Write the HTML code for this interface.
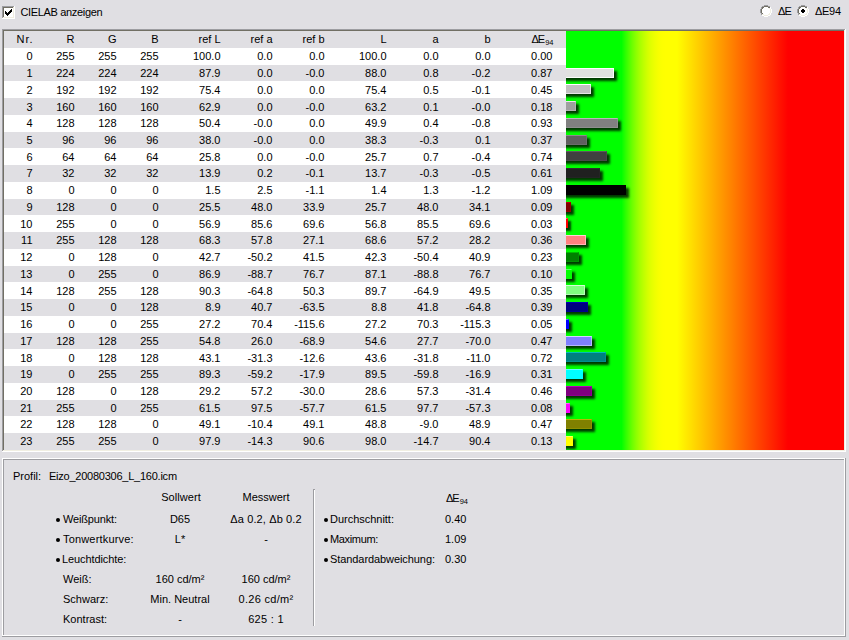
<!DOCTYPE html>
<html lang="de"><head><meta charset="utf-8"><title>CIELAB</title>
<style>html,body{margin:0;padding:0}
body{width:849px;height:640px;background:#E0DFE3;position:relative;overflow:hidden;font-family:"Liberation Sans",Arial,sans-serif;font-size:11px;color:#000;line-height:13px}
.a{position:absolute}
.t{position:absolute;white-space:nowrap;height:13px;line-height:13px}
.r{text-align:right}
.c{text-align:center}
.row{position:absolute;left:4px;width:562px}
.w{background:#fff}
.bar{position:absolute;left:-6px;height:8px;border:1px solid;box-shadow:3px 3px 2.2px rgba(0,10,0,.8)}
.sub{font-size:7.5px;position:relative;top:1.5px;letter-spacing:0}
.b{position:absolute;width:4px;height:4px;border-radius:2px;background:#000}
</style></head><body>
<div class="a" style="left:2px;top:6px;width:13px;height:13px;background:#FFFFFF"></div><div class="a" style="left:2px;top:6px;width:12px;height:12px;background:#9D9DA1"></div><div class="a" style="left:3px;top:7px;width:11px;height:11px;background:#F1EFE2"></div><div class="a" style="left:3px;top:7px;width:10px;height:10px;background:#716F64"></div><div class="a" style="left:4px;top:8px;width:9px;height:9px;background:#fff"></div><svg class="a" style="left:5px;top:9px" width="7" height="7" shape-rendering="crispEdges"><rect x="0" y="2" width="1" height="3" fill="#000"/><rect x="1" y="3" width="1" height="3" fill="#000"/><rect x="2" y="4" width="1" height="3" fill="#000"/><rect x="3" y="3" width="1" height="3" fill="#000"/><rect x="4" y="2" width="1" height="3" fill="#000"/><rect x="5" y="1" width="1" height="3" fill="#000"/><rect x="6" y="0" width="1" height="3" fill="#000"/></svg><div class="t" style="left:20.4px;top:6px;letter-spacing:-0.33px">CIELAB anzeigen</div>
<svg class="a" style="left:760px;top:5px" width="12" height="12" shape-rendering="crispEdges"><rect x="4" y="0" width="4" height="1" fill="#9D9DA1"/><rect x="2" y="1" width="2" height="1" fill="#9D9DA1"/><rect x="4" y="1" width="4" height="1" fill="#716F64"/><rect x="8" y="1" width="2" height="1" fill="#9D9DA1"/><rect x="1" y="2" width="1" height="1" fill="#9D9DA1"/><rect x="2" y="2" width="2" height="1" fill="#716F64"/><rect x="4" y="2" width="4" height="1" fill="#fff"/><rect x="8" y="2" width="2" height="1" fill="#716F64"/><rect x="10" y="2" width="1" height="1" fill="#FFFFFF"/><rect x="1" y="3" width="1" height="1" fill="#9D9DA1"/><rect x="2" y="3" width="1" height="1" fill="#716F64"/><rect x="3" y="3" width="6" height="1" fill="#fff"/><rect x="9" y="3" width="1" height="1" fill="#F1EFE2"/><rect x="10" y="3" width="1" height="1" fill="#FFFFFF"/><rect x="0" y="4" width="1" height="1" fill="#9D9DA1"/><rect x="1" y="4" width="1" height="1" fill="#716F64"/><rect x="2" y="4" width="8" height="1" fill="#fff"/><rect x="10" y="4" width="1" height="1" fill="#F1EFE2"/><rect x="11" y="4" width="1" height="1" fill="#FFFFFF"/><rect x="0" y="5" width="1" height="1" fill="#9D9DA1"/><rect x="1" y="5" width="1" height="1" fill="#716F64"/><rect x="2" y="5" width="8" height="1" fill="#fff"/><rect x="10" y="5" width="1" height="1" fill="#F1EFE2"/><rect x="11" y="5" width="1" height="1" fill="#FFFFFF"/><rect x="0" y="6" width="1" height="1" fill="#9D9DA1"/><rect x="1" y="6" width="1" height="1" fill="#716F64"/><rect x="2" y="6" width="8" height="1" fill="#fff"/><rect x="10" y="6" width="1" height="1" fill="#F1EFE2"/><rect x="11" y="6" width="1" height="1" fill="#FFFFFF"/><rect x="0" y="7" width="1" height="1" fill="#9D9DA1"/><rect x="1" y="7" width="1" height="1" fill="#716F64"/><rect x="2" y="7" width="8" height="1" fill="#fff"/><rect x="10" y="7" width="1" height="1" fill="#F1EFE2"/><rect x="11" y="7" width="1" height="1" fill="#FFFFFF"/><rect x="1" y="8" width="1" height="1" fill="#9D9DA1"/><rect x="2" y="8" width="1" height="1" fill="#716F64"/><rect x="3" y="8" width="6" height="1" fill="#fff"/><rect x="9" y="8" width="1" height="1" fill="#F1EFE2"/><rect x="10" y="8" width="1" height="1" fill="#FFFFFF"/><rect x="1" y="9" width="1" height="1" fill="#9D9DA1"/><rect x="2" y="9" width="2" height="1" fill="#F1EFE2"/><rect x="4" y="9" width="4" height="1" fill="#fff"/><rect x="8" y="9" width="2" height="1" fill="#F1EFE2"/><rect x="10" y="9" width="1" height="1" fill="#FFFFFF"/><rect x="2" y="10" width="2" height="1" fill="#FFFFFF"/><rect x="4" y="10" width="4" height="1" fill="#F1EFE2"/><rect x="8" y="10" width="2" height="1" fill="#FFFFFF"/><rect x="4" y="11" width="4" height="1" fill="#FFFFFF"/></svg><div class="t" style="left:778px;top:5px;letter-spacing:-0.8px">ΔE</div><svg class="a" style="left:797px;top:5px" width="12" height="12" shape-rendering="crispEdges"><rect x="4" y="0" width="4" height="1" fill="#9D9DA1"/><rect x="2" y="1" width="2" height="1" fill="#9D9DA1"/><rect x="4" y="1" width="4" height="1" fill="#716F64"/><rect x="8" y="1" width="2" height="1" fill="#9D9DA1"/><rect x="1" y="2" width="1" height="1" fill="#9D9DA1"/><rect x="2" y="2" width="2" height="1" fill="#716F64"/><rect x="4" y="2" width="4" height="1" fill="#fff"/><rect x="8" y="2" width="2" height="1" fill="#716F64"/><rect x="10" y="2" width="1" height="1" fill="#FFFFFF"/><rect x="1" y="3" width="1" height="1" fill="#9D9DA1"/><rect x="2" y="3" width="1" height="1" fill="#716F64"/><rect x="3" y="3" width="6" height="1" fill="#fff"/><rect x="9" y="3" width="1" height="1" fill="#F1EFE2"/><rect x="10" y="3" width="1" height="1" fill="#FFFFFF"/><rect x="0" y="4" width="1" height="1" fill="#9D9DA1"/><rect x="1" y="4" width="1" height="1" fill="#716F64"/><rect x="2" y="4" width="8" height="1" fill="#fff"/><rect x="10" y="4" width="1" height="1" fill="#F1EFE2"/><rect x="11" y="4" width="1" height="1" fill="#FFFFFF"/><rect x="0" y="5" width="1" height="1" fill="#9D9DA1"/><rect x="1" y="5" width="1" height="1" fill="#716F64"/><rect x="2" y="5" width="8" height="1" fill="#fff"/><rect x="10" y="5" width="1" height="1" fill="#F1EFE2"/><rect x="11" y="5" width="1" height="1" fill="#FFFFFF"/><rect x="0" y="6" width="1" height="1" fill="#9D9DA1"/><rect x="1" y="6" width="1" height="1" fill="#716F64"/><rect x="2" y="6" width="8" height="1" fill="#fff"/><rect x="10" y="6" width="1" height="1" fill="#F1EFE2"/><rect x="11" y="6" width="1" height="1" fill="#FFFFFF"/><rect x="0" y="7" width="1" height="1" fill="#9D9DA1"/><rect x="1" y="7" width="1" height="1" fill="#716F64"/><rect x="2" y="7" width="8" height="1" fill="#fff"/><rect x="10" y="7" width="1" height="1" fill="#F1EFE2"/><rect x="11" y="7" width="1" height="1" fill="#FFFFFF"/><rect x="1" y="8" width="1" height="1" fill="#9D9DA1"/><rect x="2" y="8" width="1" height="1" fill="#716F64"/><rect x="3" y="8" width="6" height="1" fill="#fff"/><rect x="9" y="8" width="1" height="1" fill="#F1EFE2"/><rect x="10" y="8" width="1" height="1" fill="#FFFFFF"/><rect x="1" y="9" width="1" height="1" fill="#9D9DA1"/><rect x="2" y="9" width="2" height="1" fill="#F1EFE2"/><rect x="4" y="9" width="4" height="1" fill="#fff"/><rect x="8" y="9" width="2" height="1" fill="#F1EFE2"/><rect x="10" y="9" width="1" height="1" fill="#FFFFFF"/><rect x="2" y="10" width="2" height="1" fill="#FFFFFF"/><rect x="4" y="10" width="4" height="1" fill="#F1EFE2"/><rect x="8" y="10" width="2" height="1" fill="#FFFFFF"/><rect x="4" y="11" width="4" height="1" fill="#FFFFFF"/><rect x="5" y="4" width="2" height="4" fill="#000"/><rect x="4" y="5" width="4" height="2" fill="#000"/></svg><div class="t" style="left:815px;top:5px;letter-spacing:-0.3px">ΔE94</div>
<div class="a" style="left:2px;top:29px;width:844px;height:423px;background:#FFFFFF"></div><div class="a" style="left:2px;top:29px;width:843px;height:422px;background:#9D9DA1"></div><div class="a" style="left:3px;top:30px;width:842px;height:421px;background:#F1EFE2"></div><div class="a" style="left:3px;top:30px;width:841px;height:420px;background:#716F64"></div><div class="a" style="left:4px;top:31px;width:840px;height:419px;background:#E0DFE3"></div>
<div class="row w" style="top:48px;height:17px"></div><div class="row w" style="top:81px;height:17px"></div><div class="row w" style="top:115px;height:17px"></div><div class="row w" style="top:148px;height:17px"></div><div class="row w" style="top:182px;height:17px"></div><div class="row w" style="top:215px;height:17px"></div><div class="row w" style="top:249px;height:17px"></div><div class="row w" style="top:282px;height:17px"></div><div class="row w" style="top:316px;height:17px"></div><div class="row w" style="top:349px;height:17px"></div><div class="row w" style="top:383px;height:17px"></div><div class="row w" style="top:416px;height:17px"></div>
<div class="a" style="left:566px;top:31px;width:278px;height:419px;overflow:hidden;background:linear-gradient(to right,#00ff00 0,#00ff00 55.5px,rgb(41,255,0) 59.2px,rgb(78,255,0) 62.9px,rgb(112,255,0) 66.6px,rgb(142,255,0) 70.3px,rgb(168,255,0) 74.0px,rgb(191,255,0) 77.8px,rgb(211,255,0) 81.5px,rgb(227,255,0) 85.2px,rgb(239,255,0) 88.9px,rgb(248,255,0) 92.6px,rgb(253,255,0) 96.3px,rgb(255,255,0) 100.0px,#ffff00 111.0px,#ff0000 222.0px,#ff0000 100%)"><div class="bar" style="top:37px;width:52px;background:rgb(224,224,224);border-color:rgb(255,255,255) rgb(252,252,252) rgb(252,252,252) rgb(224,224,224)"></div><div class="bar" style="top:53px;width:29px;background:rgb(192,192,192);border-color:rgb(255,255,255) rgb(229,229,229) rgb(229,229,229) rgb(192,192,192)"></div><div class="bar" style="top:70px;width:14px;background:rgb(160,160,160);border-color:rgb(232,232,232) rgb(179,179,179) rgb(179,179,179) rgb(160,160,160)"></div><div class="bar" style="top:87px;width:56px;background:rgb(128,128,128);border-color:rgb(186,186,186) rgb(143,143,143) rgb(143,143,143) rgb(128,128,128)"></div><div class="bar" style="top:104px;width:25px;background:rgb(96,96,96);border-color:rgb(139,139,139) rgb(108,108,108) rgb(108,108,108) rgb(96,96,96)"></div><div class="bar" style="top:120px;width:45px;background:rgb(64,64,64);border-color:rgb(93,93,93) rgb(72,72,72) rgb(72,72,72) rgb(64,64,64)"></div><div class="bar" style="top:137px;width:38px;background:rgb(32,32,32);border-color:rgb(46,46,46) rgb(36,36,36) rgb(36,36,36) rgb(32,32,32)"></div><div class="bar" style="top:154px;width:64px;background:rgb(0,0,0);border-color:rgb(0,0,0) rgb(0,0,0) rgb(0,0,0) rgb(0,0,0)"></div><div class="bar" style="top:171px;width:9px;background:rgb(128,0,0);border-color:rgb(186,0,0) rgb(143,0,0) rgb(143,0,0) rgb(128,0,0)"></div><div class="bar" style="top:187px;width:6px;background:rgb(255,0,0);border-color:rgb(255,102,102) rgb(255,0,0) rgb(255,0,0) rgb(255,0,0)"></div><div class="bar" style="top:204px;width:24px;background:rgb(255,128,128);border-color:rgb(255,213,213) rgb(255,182,182) rgb(255,182,182) rgb(255,128,128)"></div><div class="bar" style="top:221px;width:17px;background:rgb(0,128,0);border-color:rgb(0,186,0) rgb(0,143,0) rgb(0,143,0) rgb(0,128,0)"></div><div class="bar" style="top:238px;width:10px;background:rgb(0,255,0);border-color:rgb(102,255,102) rgb(0,255,0) rgb(0,255,0) rgb(0,255,0)"></div><div class="bar" style="top:254px;width:23px;background:rgb(128,255,128);border-color:rgb(213,255,213) rgb(182,255,182) rgb(182,255,182) rgb(128,255,128)"></div><div class="bar" style="top:271px;width:26px;background:rgb(0,0,128);border-color:rgb(0,0,186) rgb(0,0,143) rgb(0,0,143) rgb(0,0,128)"></div><div class="bar" style="top:288px;width:7px;background:rgb(0,0,255);border-color:rgb(102,102,255) rgb(0,0,255) rgb(0,0,255) rgb(0,0,255)"></div><div class="bar" style="top:305px;width:30px;background:rgb(128,128,255);border-color:rgb(213,213,255) rgb(182,182,255) rgb(182,182,255) rgb(128,128,255)"></div><div class="bar" style="top:321px;width:44px;background:rgb(0,128,128);border-color:rgb(0,186,186) rgb(0,143,143) rgb(0,143,143) rgb(0,128,128)"></div><div class="bar" style="top:338px;width:21px;background:rgb(0,255,255);border-color:rgb(102,255,255) rgb(0,255,255) rgb(0,255,255) rgb(0,255,255)"></div><div class="bar" style="top:355px;width:30px;background:rgb(128,0,128);border-color:rgb(186,0,186) rgb(143,0,143) rgb(143,0,143) rgb(128,0,128)"></div><div class="bar" style="top:372px;width:8px;background:rgb(255,0,255);border-color:rgb(255,102,255) rgb(255,0,255) rgb(255,0,255) rgb(255,0,255)"></div><div class="bar" style="top:388px;width:30px;background:rgb(128,128,0);border-color:rgb(186,186,0) rgb(143,143,0) rgb(143,143,0) rgb(128,128,0)"></div><div class="bar" style="top:405px;width:11px;background:rgb(255,255,0);border-color:rgb(255,255,102) rgb(255,255,0) rgb(255,255,0) rgb(255,255,0)"></div></div>
<div class="a" style="left:0;top:32px;width:560px;height:13px;transform:translateY(0.6px)"><div class="t r" style="left:-36.5px;width:70px;top:0px;letter-spacing:1px">Nr.</div><div class="t r" style="left:4.5px;width:70px;top:0px">R</div><div class="t r" style="left:46.5px;width:70px;top:0px">G</div><div class="t r" style="left:88.5px;width:70px;top:0px">B</div><div class="t r" style="left:150.5px;width:70px;top:0px">ref L</div><div class="t r" style="left:202.5px;width:70px;top:0px">ref a</div><div class="t r" style="left:254.5px;width:70px;top:0px">ref b</div><div class="t r" style="left:316.5px;width:70px;top:0px">L</div><div class="t r" style="left:368.5px;width:70px;top:0px">a</div><div class="t r" style="left:420.5px;width:70px;top:0px">b</div><div class="t r" style="left:483.5px;width:70px;top:0px"><span style="letter-spacing:-1px">Δ</span>E<span class="sub">94</span></div></div>
<div class="a" style="left:0;top:50px;width:560px;height:13px;transform:translateY(0.30px)"><div class="t r" style="left:-37.5px;width:70px;top:0px">0</div><div class="t r" style="left:4.5px;width:70px;top:0px">255</div><div class="t r" style="left:46.5px;width:70px;top:0px">255</div><div class="t r" style="left:88.5px;width:70px;top:0px">255</div><div class="t r" style="left:150.5px;width:70px;top:0px">100.0</div><div class="t r" style="left:202.5px;width:70px;top:0px">0.0</div><div class="t r" style="left:254.5px;width:70px;top:0px">0.0</div><div class="t r" style="left:316.5px;width:70px;top:0px">100.0</div><div class="t r" style="left:368.5px;width:70px;top:0px">0.0</div><div class="t r" style="left:420.5px;width:70px;top:0px">0.0</div><div class="t r" style="left:482.5px;width:70px;top:0px">0.00</div></div>
<div class="a" style="left:0;top:67px;width:560px;height:13px;transform:translateY(0.03px)"><div class="t r" style="left:-37.5px;width:70px;top:0px">1</div><div class="t r" style="left:4.5px;width:70px;top:0px">224</div><div class="t r" style="left:46.5px;width:70px;top:0px">224</div><div class="t r" style="left:88.5px;width:70px;top:0px">224</div><div class="t r" style="left:150.5px;width:70px;top:0px">87.9</div><div class="t r" style="left:202.5px;width:70px;top:0px">0.0</div><div class="t r" style="left:254.5px;width:70px;top:0px">-0.0</div><div class="t r" style="left:316.5px;width:70px;top:0px">88.0</div><div class="t r" style="left:368.5px;width:70px;top:0px">0.8</div><div class="t r" style="left:420.5px;width:70px;top:0px">-0.2</div><div class="t r" style="left:482.5px;width:70px;top:0px">0.87</div></div>
<div class="a" style="left:0;top:83px;width:560px;height:13px;transform:translateY(0.77px)"><div class="t r" style="left:-37.5px;width:70px;top:0px">2</div><div class="t r" style="left:4.5px;width:70px;top:0px">192</div><div class="t r" style="left:46.5px;width:70px;top:0px">192</div><div class="t r" style="left:88.5px;width:70px;top:0px">192</div><div class="t r" style="left:150.5px;width:70px;top:0px">75.4</div><div class="t r" style="left:202.5px;width:70px;top:0px">0.0</div><div class="t r" style="left:254.5px;width:70px;top:0px">0.0</div><div class="t r" style="left:316.5px;width:70px;top:0px">75.4</div><div class="t r" style="left:368.5px;width:70px;top:0px">0.5</div><div class="t r" style="left:420.5px;width:70px;top:0px">-0.1</div><div class="t r" style="left:482.5px;width:70px;top:0px">0.45</div></div>
<div class="a" style="left:0;top:100px;width:560px;height:13px;transform:translateY(0.50px)"><div class="t r" style="left:-37.5px;width:70px;top:0px">3</div><div class="t r" style="left:4.5px;width:70px;top:0px">160</div><div class="t r" style="left:46.5px;width:70px;top:0px">160</div><div class="t r" style="left:88.5px;width:70px;top:0px">160</div><div class="t r" style="left:150.5px;width:70px;top:0px">62.9</div><div class="t r" style="left:202.5px;width:70px;top:0px">0.0</div><div class="t r" style="left:254.5px;width:70px;top:0px">-0.0</div><div class="t r" style="left:316.5px;width:70px;top:0px">63.2</div><div class="t r" style="left:368.5px;width:70px;top:0px">0.1</div><div class="t r" style="left:420.5px;width:70px;top:0px">-0.0</div><div class="t r" style="left:482.5px;width:70px;top:0px">0.18</div></div>
<div class="a" style="left:0;top:117px;width:560px;height:13px;transform:translateY(0.24px)"><div class="t r" style="left:-37.5px;width:70px;top:0px">4</div><div class="t r" style="left:4.5px;width:70px;top:0px">128</div><div class="t r" style="left:46.5px;width:70px;top:0px">128</div><div class="t r" style="left:88.5px;width:70px;top:0px">128</div><div class="t r" style="left:150.5px;width:70px;top:0px">50.4</div><div class="t r" style="left:202.5px;width:70px;top:0px">-0.0</div><div class="t r" style="left:254.5px;width:70px;top:0px">0.0</div><div class="t r" style="left:316.5px;width:70px;top:0px">49.9</div><div class="t r" style="left:368.5px;width:70px;top:0px">0.4</div><div class="t r" style="left:420.5px;width:70px;top:0px">-0.8</div><div class="t r" style="left:482.5px;width:70px;top:0px">0.93</div></div>
<div class="a" style="left:0;top:133px;width:560px;height:13px;transform:translateY(0.97px)"><div class="t r" style="left:-37.5px;width:70px;top:0px">5</div><div class="t r" style="left:4.5px;width:70px;top:0px">96</div><div class="t r" style="left:46.5px;width:70px;top:0px">96</div><div class="t r" style="left:88.5px;width:70px;top:0px">96</div><div class="t r" style="left:150.5px;width:70px;top:0px">38.0</div><div class="t r" style="left:202.5px;width:70px;top:0px">-0.0</div><div class="t r" style="left:254.5px;width:70px;top:0px">0.0</div><div class="t r" style="left:316.5px;width:70px;top:0px">38.3</div><div class="t r" style="left:368.5px;width:70px;top:0px">-0.3</div><div class="t r" style="left:420.5px;width:70px;top:0px">0.1</div><div class="t r" style="left:482.5px;width:70px;top:0px">0.37</div></div>
<div class="a" style="left:0;top:150px;width:560px;height:13px;transform:translateY(0.71px)"><div class="t r" style="left:-37.5px;width:70px;top:0px">6</div><div class="t r" style="left:4.5px;width:70px;top:0px">64</div><div class="t r" style="left:46.5px;width:70px;top:0px">64</div><div class="t r" style="left:88.5px;width:70px;top:0px">64</div><div class="t r" style="left:150.5px;width:70px;top:0px">25.8</div><div class="t r" style="left:202.5px;width:70px;top:0px">0.0</div><div class="t r" style="left:254.5px;width:70px;top:0px">-0.0</div><div class="t r" style="left:316.5px;width:70px;top:0px">25.7</div><div class="t r" style="left:368.5px;width:70px;top:0px">0.7</div><div class="t r" style="left:420.5px;width:70px;top:0px">-0.4</div><div class="t r" style="left:482.5px;width:70px;top:0px">0.74</div></div>
<div class="a" style="left:0;top:167px;width:560px;height:13px;transform:translateY(0.44px)"><div class="t r" style="left:-37.5px;width:70px;top:0px">7</div><div class="t r" style="left:4.5px;width:70px;top:0px">32</div><div class="t r" style="left:46.5px;width:70px;top:0px">32</div><div class="t r" style="left:88.5px;width:70px;top:0px">32</div><div class="t r" style="left:150.5px;width:70px;top:0px">13.9</div><div class="t r" style="left:202.5px;width:70px;top:0px">0.2</div><div class="t r" style="left:254.5px;width:70px;top:0px">-0.1</div><div class="t r" style="left:316.5px;width:70px;top:0px">13.7</div><div class="t r" style="left:368.5px;width:70px;top:0px">-0.3</div><div class="t r" style="left:420.5px;width:70px;top:0px">-0.5</div><div class="t r" style="left:482.5px;width:70px;top:0px">0.61</div></div>
<div class="a" style="left:0;top:184px;width:560px;height:13px;transform:translateY(0.18px)"><div class="t r" style="left:-37.5px;width:70px;top:0px">8</div><div class="t r" style="left:4.5px;width:70px;top:0px">0</div><div class="t r" style="left:46.5px;width:70px;top:0px">0</div><div class="t r" style="left:88.5px;width:70px;top:0px">0</div><div class="t r" style="left:150.5px;width:70px;top:0px">1.5</div><div class="t r" style="left:202.5px;width:70px;top:0px">2.5</div><div class="t r" style="left:254.5px;width:70px;top:0px">-1.1</div><div class="t r" style="left:316.5px;width:70px;top:0px">1.4</div><div class="t r" style="left:368.5px;width:70px;top:0px">1.3</div><div class="t r" style="left:420.5px;width:70px;top:0px">-1.2</div><div class="t r" style="left:482.5px;width:70px;top:0px">1.09</div></div>
<div class="a" style="left:0;top:200px;width:560px;height:13px;transform:translateY(0.92px)"><div class="t r" style="left:-37.5px;width:70px;top:0px">9</div><div class="t r" style="left:4.5px;width:70px;top:0px">128</div><div class="t r" style="left:46.5px;width:70px;top:0px">0</div><div class="t r" style="left:88.5px;width:70px;top:0px">0</div><div class="t r" style="left:150.5px;width:70px;top:0px">25.5</div><div class="t r" style="left:202.5px;width:70px;top:0px">48.0</div><div class="t r" style="left:254.5px;width:70px;top:0px">33.9</div><div class="t r" style="left:316.5px;width:70px;top:0px">25.7</div><div class="t r" style="left:368.5px;width:70px;top:0px">48.0</div><div class="t r" style="left:420.5px;width:70px;top:0px">34.1</div><div class="t r" style="left:482.5px;width:70px;top:0px">0.09</div></div>
<div class="a" style="left:0;top:217px;width:560px;height:13px;transform:translateY(0.65px)"><div class="t r" style="left:-37.5px;width:70px;top:0px">10</div><div class="t r" style="left:4.5px;width:70px;top:0px">255</div><div class="t r" style="left:46.5px;width:70px;top:0px">0</div><div class="t r" style="left:88.5px;width:70px;top:0px">0</div><div class="t r" style="left:150.5px;width:70px;top:0px">56.9</div><div class="t r" style="left:202.5px;width:70px;top:0px">85.6</div><div class="t r" style="left:254.5px;width:70px;top:0px">69.6</div><div class="t r" style="left:316.5px;width:70px;top:0px">56.8</div><div class="t r" style="left:368.5px;width:70px;top:0px">85.5</div><div class="t r" style="left:420.5px;width:70px;top:0px">69.6</div><div class="t r" style="left:482.5px;width:70px;top:0px">0.03</div></div>
<div class="a" style="left:0;top:234px;width:560px;height:13px;transform:translateY(0.38px)"><div class="t r" style="left:-37.5px;width:70px;top:0px">11</div><div class="t r" style="left:4.5px;width:70px;top:0px">255</div><div class="t r" style="left:46.5px;width:70px;top:0px">128</div><div class="t r" style="left:88.5px;width:70px;top:0px">128</div><div class="t r" style="left:150.5px;width:70px;top:0px">68.3</div><div class="t r" style="left:202.5px;width:70px;top:0px">57.8</div><div class="t r" style="left:254.5px;width:70px;top:0px">27.1</div><div class="t r" style="left:316.5px;width:70px;top:0px">68.6</div><div class="t r" style="left:368.5px;width:70px;top:0px">57.2</div><div class="t r" style="left:420.5px;width:70px;top:0px">28.2</div><div class="t r" style="left:482.5px;width:70px;top:0px">0.36</div></div>
<div class="a" style="left:0;top:251px;width:560px;height:13px;transform:translateY(0.12px)"><div class="t r" style="left:-37.5px;width:70px;top:0px">12</div><div class="t r" style="left:4.5px;width:70px;top:0px">0</div><div class="t r" style="left:46.5px;width:70px;top:0px">128</div><div class="t r" style="left:88.5px;width:70px;top:0px">0</div><div class="t r" style="left:150.5px;width:70px;top:0px">42.7</div><div class="t r" style="left:202.5px;width:70px;top:0px">-50.2</div><div class="t r" style="left:254.5px;width:70px;top:0px">41.5</div><div class="t r" style="left:316.5px;width:70px;top:0px">42.3</div><div class="t r" style="left:368.5px;width:70px;top:0px">-50.4</div><div class="t r" style="left:420.5px;width:70px;top:0px">40.9</div><div class="t r" style="left:482.5px;width:70px;top:0px">0.23</div></div>
<div class="a" style="left:0;top:267px;width:560px;height:13px;transform:translateY(0.86px)"><div class="t r" style="left:-37.5px;width:70px;top:0px">13</div><div class="t r" style="left:4.5px;width:70px;top:0px">0</div><div class="t r" style="left:46.5px;width:70px;top:0px">255</div><div class="t r" style="left:88.5px;width:70px;top:0px">0</div><div class="t r" style="left:150.5px;width:70px;top:0px">86.9</div><div class="t r" style="left:202.5px;width:70px;top:0px">-88.7</div><div class="t r" style="left:254.5px;width:70px;top:0px">76.7</div><div class="t r" style="left:316.5px;width:70px;top:0px">87.1</div><div class="t r" style="left:368.5px;width:70px;top:0px">-88.8</div><div class="t r" style="left:420.5px;width:70px;top:0px">76.7</div><div class="t r" style="left:482.5px;width:70px;top:0px">0.10</div></div>
<div class="a" style="left:0;top:284px;width:560px;height:13px;transform:translateY(0.59px)"><div class="t r" style="left:-37.5px;width:70px;top:0px">14</div><div class="t r" style="left:4.5px;width:70px;top:0px">128</div><div class="t r" style="left:46.5px;width:70px;top:0px">255</div><div class="t r" style="left:88.5px;width:70px;top:0px">128</div><div class="t r" style="left:150.5px;width:70px;top:0px">90.3</div><div class="t r" style="left:202.5px;width:70px;top:0px">-64.8</div><div class="t r" style="left:254.5px;width:70px;top:0px">50.3</div><div class="t r" style="left:316.5px;width:70px;top:0px">89.7</div><div class="t r" style="left:368.5px;width:70px;top:0px">-64.9</div><div class="t r" style="left:420.5px;width:70px;top:0px">49.5</div><div class="t r" style="left:482.5px;width:70px;top:0px">0.35</div></div>
<div class="a" style="left:0;top:301px;width:560px;height:13px;transform:translateY(0.32px)"><div class="t r" style="left:-37.5px;width:70px;top:0px">15</div><div class="t r" style="left:4.5px;width:70px;top:0px">0</div><div class="t r" style="left:46.5px;width:70px;top:0px">0</div><div class="t r" style="left:88.5px;width:70px;top:0px">128</div><div class="t r" style="left:150.5px;width:70px;top:0px">8.9</div><div class="t r" style="left:202.5px;width:70px;top:0px">40.7</div><div class="t r" style="left:254.5px;width:70px;top:0px">-63.5</div><div class="t r" style="left:316.5px;width:70px;top:0px">8.8</div><div class="t r" style="left:368.5px;width:70px;top:0px">41.8</div><div class="t r" style="left:420.5px;width:70px;top:0px">-64.8</div><div class="t r" style="left:482.5px;width:70px;top:0px">0.39</div></div>
<div class="a" style="left:0;top:318px;width:560px;height:13px;transform:translateY(0.06px)"><div class="t r" style="left:-37.5px;width:70px;top:0px">16</div><div class="t r" style="left:4.5px;width:70px;top:0px">0</div><div class="t r" style="left:46.5px;width:70px;top:0px">0</div><div class="t r" style="left:88.5px;width:70px;top:0px">255</div><div class="t r" style="left:150.5px;width:70px;top:0px">27.2</div><div class="t r" style="left:202.5px;width:70px;top:0px">70.4</div><div class="t r" style="left:254.5px;width:70px;top:0px">-115.6</div><div class="t r" style="left:316.5px;width:70px;top:0px">27.2</div><div class="t r" style="left:368.5px;width:70px;top:0px">70.3</div><div class="t r" style="left:420.5px;width:70px;top:0px">-115.3</div><div class="t r" style="left:482.5px;width:70px;top:0px">0.05</div></div>
<div class="a" style="left:0;top:334px;width:560px;height:13px;transform:translateY(0.80px)"><div class="t r" style="left:-37.5px;width:70px;top:0px">17</div><div class="t r" style="left:4.5px;width:70px;top:0px">128</div><div class="t r" style="left:46.5px;width:70px;top:0px">128</div><div class="t r" style="left:88.5px;width:70px;top:0px">255</div><div class="t r" style="left:150.5px;width:70px;top:0px">54.8</div><div class="t r" style="left:202.5px;width:70px;top:0px">26.0</div><div class="t r" style="left:254.5px;width:70px;top:0px">-68.9</div><div class="t r" style="left:316.5px;width:70px;top:0px">54.6</div><div class="t r" style="left:368.5px;width:70px;top:0px">27.7</div><div class="t r" style="left:420.5px;width:70px;top:0px">-70.0</div><div class="t r" style="left:482.5px;width:70px;top:0px">0.47</div></div>
<div class="a" style="left:0;top:351px;width:560px;height:13px;transform:translateY(0.53px)"><div class="t r" style="left:-37.5px;width:70px;top:0px">18</div><div class="t r" style="left:4.5px;width:70px;top:0px">0</div><div class="t r" style="left:46.5px;width:70px;top:0px">128</div><div class="t r" style="left:88.5px;width:70px;top:0px">128</div><div class="t r" style="left:150.5px;width:70px;top:0px">43.1</div><div class="t r" style="left:202.5px;width:70px;top:0px">-31.3</div><div class="t r" style="left:254.5px;width:70px;top:0px">-12.6</div><div class="t r" style="left:316.5px;width:70px;top:0px">43.6</div><div class="t r" style="left:368.5px;width:70px;top:0px">-31.8</div><div class="t r" style="left:420.5px;width:70px;top:0px">-11.0</div><div class="t r" style="left:482.5px;width:70px;top:0px">0.72</div></div>
<div class="a" style="left:0;top:368px;width:560px;height:13px;transform:translateY(0.26px)"><div class="t r" style="left:-37.5px;width:70px;top:0px">19</div><div class="t r" style="left:4.5px;width:70px;top:0px">0</div><div class="t r" style="left:46.5px;width:70px;top:0px">255</div><div class="t r" style="left:88.5px;width:70px;top:0px">255</div><div class="t r" style="left:150.5px;width:70px;top:0px">89.3</div><div class="t r" style="left:202.5px;width:70px;top:0px">-59.2</div><div class="t r" style="left:254.5px;width:70px;top:0px">-17.9</div><div class="t r" style="left:316.5px;width:70px;top:0px">89.5</div><div class="t r" style="left:368.5px;width:70px;top:0px">-59.8</div><div class="t r" style="left:420.5px;width:70px;top:0px">-16.9</div><div class="t r" style="left:482.5px;width:70px;top:0px">0.31</div></div>
<div class="a" style="left:0;top:385px;width:560px;height:13px;transform:translateY(0.00px)"><div class="t r" style="left:-37.5px;width:70px;top:0px">20</div><div class="t r" style="left:4.5px;width:70px;top:0px">128</div><div class="t r" style="left:46.5px;width:70px;top:0px">0</div><div class="t r" style="left:88.5px;width:70px;top:0px">128</div><div class="t r" style="left:150.5px;width:70px;top:0px">29.2</div><div class="t r" style="left:202.5px;width:70px;top:0px">57.2</div><div class="t r" style="left:254.5px;width:70px;top:0px">-30.0</div><div class="t r" style="left:316.5px;width:70px;top:0px">28.6</div><div class="t r" style="left:368.5px;width:70px;top:0px">57.3</div><div class="t r" style="left:420.5px;width:70px;top:0px">-31.4</div><div class="t r" style="left:482.5px;width:70px;top:0px">0.46</div></div>
<div class="a" style="left:0;top:401px;width:560px;height:13px;transform:translateY(0.74px)"><div class="t r" style="left:-37.5px;width:70px;top:0px">21</div><div class="t r" style="left:4.5px;width:70px;top:0px">255</div><div class="t r" style="left:46.5px;width:70px;top:0px">0</div><div class="t r" style="left:88.5px;width:70px;top:0px">255</div><div class="t r" style="left:150.5px;width:70px;top:0px">61.5</div><div class="t r" style="left:202.5px;width:70px;top:0px">97.5</div><div class="t r" style="left:254.5px;width:70px;top:0px">-57.7</div><div class="t r" style="left:316.5px;width:70px;top:0px">61.5</div><div class="t r" style="left:368.5px;width:70px;top:0px">97.7</div><div class="t r" style="left:420.5px;width:70px;top:0px">-57.3</div><div class="t r" style="left:482.5px;width:70px;top:0px">0.08</div></div>
<div class="a" style="left:0;top:418px;width:560px;height:13px;transform:translateY(0.47px)"><div class="t r" style="left:-37.5px;width:70px;top:0px">22</div><div class="t r" style="left:4.5px;width:70px;top:0px">128</div><div class="t r" style="left:46.5px;width:70px;top:0px">128</div><div class="t r" style="left:88.5px;width:70px;top:0px">0</div><div class="t r" style="left:150.5px;width:70px;top:0px">49.1</div><div class="t r" style="left:202.5px;width:70px;top:0px">-10.4</div><div class="t r" style="left:254.5px;width:70px;top:0px">49.1</div><div class="t r" style="left:316.5px;width:70px;top:0px">48.8</div><div class="t r" style="left:368.5px;width:70px;top:0px">-9.0</div><div class="t r" style="left:420.5px;width:70px;top:0px">48.9</div><div class="t r" style="left:482.5px;width:70px;top:0px">0.47</div></div>
<div class="a" style="left:0;top:435px;width:560px;height:13px;transform:translateY(0.20px)"><div class="t r" style="left:-37.5px;width:70px;top:0px">23</div><div class="t r" style="left:4.5px;width:70px;top:0px">255</div><div class="t r" style="left:46.5px;width:70px;top:0px">255</div><div class="t r" style="left:88.5px;width:70px;top:0px">0</div><div class="t r" style="left:150.5px;width:70px;top:0px">97.9</div><div class="t r" style="left:202.5px;width:70px;top:0px">-14.3</div><div class="t r" style="left:254.5px;width:70px;top:0px">90.6</div><div class="t r" style="left:316.5px;width:70px;top:0px">98.0</div><div class="t r" style="left:368.5px;width:70px;top:0px">-14.7</div><div class="t r" style="left:420.5px;width:70px;top:0px">90.4</div><div class="t r" style="left:482.5px;width:70px;top:0px">0.13</div></div>
<div class="a" style="left:2px;top:458px;width:843px;height:1px;background:#FFFFFF"></div><div class="a" style="left:2px;top:458px;width:1px;height:178px;background:#FFFFFF"></div><div class="a" style="left:845px;top:458px;width:1px;height:179px;background:#9D9DA1"></div><div class="a" style="left:2px;top:636px;width:844px;height:1px;background:#9D9DA1"></div><div class="a" style="left:3px;top:459px;width:841px;height:1px;background:#9D9DA1"></div><div class="a" style="left:3px;top:459px;width:1px;height:176px;background:#9D9DA1"></div><div class="a" style="left:844px;top:459px;width:1px;height:177px;background:#FFFFFF"></div><div class="a" style="left:3px;top:635px;width:842px;height:1px;background:#FFFFFF"></div><div class="a" style="left:314px;top:489px;width:1px;height:137px;background:#FFFFFF"></div><div class="a" style="left:313px;top:489px;width:1px;height:137px;background:#9D9DA1"></div><div class="a" style="left:314px;top:489px;width:1px;height:1px;background:#9D9DA1"></div>
<div class="t " style="left:13px;top:470px">Profil:</div><div class="t " style="left:49px;top:470px;letter-spacing:-0.24px">Eizo_20080306_L_160.icm</div>
<div class="t c" style="left:121px;width:120px;top:491px;letter-spacing:0.05px">Sollwert</div><div class="t c" style="left:206px;width:120px;top:491px">Messwert</div>
<div class="b" style="left:56px;top:518px"></div><div class="t " style="left:63px;top:513px;letter-spacing:-0.15px">Weißpunkt:</div><div class="t c" style="left:120px;width:120px;top:513px">D65</div><div class="t c" style="left:206px;width:120px;top:513px;letter-spacing:0.12px">Δa 0.2, Δb 0.2</div>
<div class="b" style="left:56px;top:538px"></div><div class="t " style="left:63px;top:533px;letter-spacing:0.17px">Tonwertkurve:</div><div class="t c" style="left:120px;width:120px;top:533px">L*</div><div class="t c" style="left:206px;width:120px;top:533px">-</div>
<div class="b" style="left:56px;top:558px"></div><div class="t " style="left:62px;top:553px;letter-spacing:-0.1px">Leuchtdichte:</div>
<div class="t " style="left:63px;top:573px">Weiß:</div><div class="t c" style="left:120px;width:120px;top:573px">160 cd/m²</div><div class="t c" style="left:206px;width:120px;top:573px">160 cd/m²</div>
<div class="t " style="left:63px;top:593px">Schwarz:</div><div class="t c" style="left:120px;width:120px;top:593px">Min. Neutral</div><div class="t c" style="left:206px;width:120px;top:593px;letter-spacing:0.3px">0.26 cd/m²</div>
<div class="t " style="left:63px;top:613px">Kontrast:</div><div class="t c" style="left:120px;width:120px;top:613px">-</div><div class="t c" style="left:206px;width:120px;top:613px;letter-spacing:0.3px">625 : 1</div>
<div class="t " style="left:446px;top:492px"><span style="letter-spacing:-1px">Δ</span>E<span class="sub" style="font-size:7.5px">94</span></div>
<div class="b" style="left:324px;top:518px"></div><div class="t " style="left:330px;top:513px;letter-spacing:-0.02px">Durchschnitt:</div><div class="t " style="left:445px;top:513px">0.40</div>
<div class="b" style="left:324px;top:538px"></div><div class="t " style="left:330px;top:533px;letter-spacing:-0.35px">Maximum:</div><div class="t " style="left:445px;top:533px">1.09</div>
<div class="b" style="left:324px;top:558px"></div><div class="t " style="left:330px;top:553px;letter-spacing:-0.08px">Standardabweichung:</div><div class="t " style="left:445px;top:553px">0.30</div>
</body></html>
